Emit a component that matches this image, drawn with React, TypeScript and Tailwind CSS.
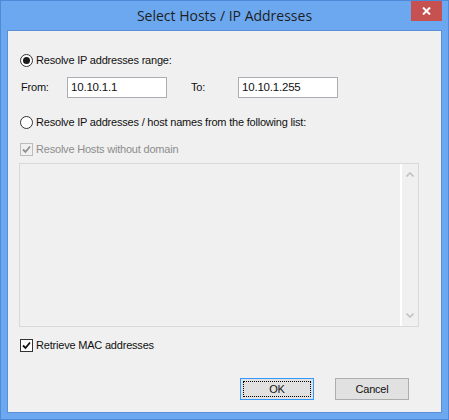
import React from "react";

const body = { fontFamily: '"Liberation Sans", Arial, sans-serif' };

function Radio({ checked }: { checked?: boolean }) {
  return (
    <div className="w-[13px] h-[13px] rounded-full border border-[#333333] bg-white flex items-center justify-center shrink-0">
      {checked && <div className="w-[7px] h-[7px] rounded-full bg-[#1a1a1a]" />}
    </div>
  );
}

function Check({ disabled }: { disabled?: boolean }) {
  return (
    <div
      className={
        "w-[13px] h-[13px] border flex items-center justify-center shrink-0 " +
        (disabled ? "border-[#bcbcbc] bg-[#f0f0f0]" : "border-[#333333] bg-white")
      }
    >
      <svg width="9" height="9" viewBox="0 0 9 9">
        <path
          d="M1 4.5 L3.5 7 L8 1.5"
          fill="none"
          stroke={disabled ? "#8f8f8f" : "#111111"}
          strokeWidth="1.8"
        />
      </svg>
    </div>
  );
}

export default function App() {
  return (
    <div className="w-[449px] h-[420px] bg-[#6ca8f0] border border-[#4f8ad8] flex flex-col px-[6px] pb-[6px] overflow-hidden">
      <div className="h-[29px] grid grid-cols-[1fr_auto_1fr] shrink-0">
        <div />
        <div
          className="text-[14px] text-[#1e1e1e] pt-[5px] leading-[20px]"
          style={{ fontFamily: '"Open Sans", "Noto Sans", sans-serif' }}
        >
          Select Hosts / IP Addresses
        </div>
        <div className="flex justify-end items-start">
          <div className="w-[31px] h-[20px] bg-[#c75050] flex items-center justify-center">
            <svg width="9" height="8" viewBox="0 0 9 8">
              <path d="M1 0.5 L8 7.5 M8 0.5 L1 7.5" stroke="#ffffff" strokeWidth="2" />
            </svg>
          </div>
        </div>
      </div>
      <div
        className="flex-1 border border-[#5b90d8] bg-[#f0f0f0] flex flex-col pl-[12px] text-[11px] tracking-[-0.2px] text-[#111111]"
        style={body}
      >
        <div className="mt-[23px] flex items-center h-[13px]">
          <Radio checked />
          <span className="ml-[3px]">Resolve IP addresses range:</span>
        </div>
        <div className="mt-[10px] flex items-center h-[21px]">
          <span className="w-[47px] pl-[1px]">From:</span>
          <div className="w-[100px] h-[21px] border border-[#abadb3] bg-white flex items-center pl-[3px] text-[11.5px]">10.10.1.1</div>
          <span className="ml-[24px] w-[47px]">To:</span>
          <div className="w-[100px] h-[21px] border border-[#abadb3] bg-white flex items-center pl-[3px] text-[11.5px]">10.10.1.255</div>
        </div>
        <div className="mt-[18px] flex items-center h-[13px]">
          <Radio />
          <span className="ml-[3px]">Resolve IP addresses / host names from the following list:</span>
        </div>
        <div className="mt-[14px] flex items-center h-[13px]">
          <Check disabled />
          <span className="ml-[3px] text-[#8d8d8d]">Resolve Hosts without domain</span>
        </div>
        <div className="mt-[7px] -ml-[1px] w-[400px] h-[164px] border border-[#d9d9d9] bg-[#f0f0f0] flex justify-end">
          <div className="w-[18px] h-full border-l-2 border-white flex flex-col items-center justify-between py-[8px]">
            <svg width="8" height="5" viewBox="0 0 8 5">
              <path d="M0.5 4.5 L4 1 L7.5 4.5" fill="none" stroke="#c2c2c2" strokeWidth="1.6" />
            </svg>
            <svg width="8" height="5" viewBox="0 0 8 5">
              <path d="M0.5 0.5 L4 4 L7.5 0.5" fill="none" stroke="#c2c2c2" strokeWidth="1.6" />
            </svg>
          </div>
        </div>
        <div className="mt-[12px] flex items-center h-[13px]">
          <Check />
          <span className="ml-[3px]">Retrieve MAC addresses</span>
        </div>
        <div className="mt-[26px] flex pl-[220px] gap-[21px]">
          <div className="w-[74px] h-[22px] border border-[#3399ff] bg-[#e1e1e1] p-[2px]">
            <div className="w-full h-full border border-dotted border-black flex items-center justify-center">
              OK
            </div>
          </div>
          <div className="w-[74px] h-[22px] border border-[#adadad] bg-[#e1e1e1] flex items-center justify-center">
            Cancel
          </div>
        </div>
      </div>
    </div>
  );
}
